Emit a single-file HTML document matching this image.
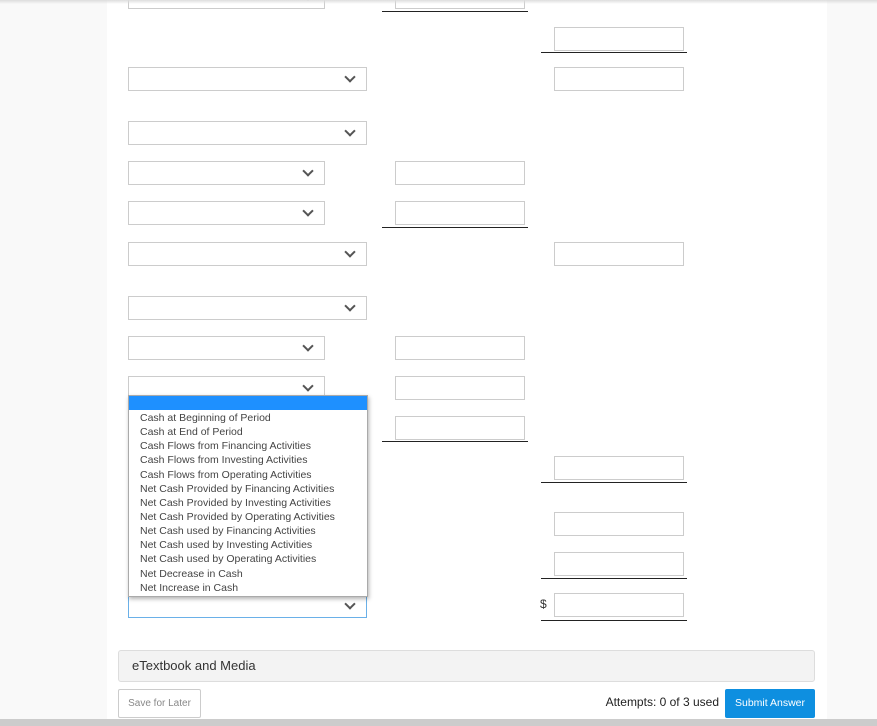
<!DOCTYPE html>
<html><head><style>
body{margin:0;width:877px;height:726px;background:#f9f9f9;position:relative;overflow:hidden;font-family:"Liberation Sans",sans-serif}
.panel{position:absolute;left:107px;top:0;width:720px;height:726px;background:#fff}
.s,.i{position:absolute;box-sizing:border-box;border:1px solid #ccc;background:#fff;height:24px}
.s.w{left:128px;width:239px}.s.n{left:128px;width:197px}
.s::after{content:"";position:absolute;right:12px;top:5px;width:6px;height:6px;border-right:2px solid #555;border-bottom:2px solid #555;transform:rotate(45deg)}
.i.a{left:395px;width:130px}.i.b{left:554px;width:130px}
.u{position:absolute;height:1px;background:#222}
.u.a{left:382px;width:146px}.u.b{left:541px;width:146px}
.dd{position:absolute;left:128px;top:395px;width:238px;height:200px;overflow:hidden;background:#fff;border:1px solid #aaa;box-shadow:1px 2px 4px rgba(0,0,0,.3);font-size:10.5px;color:#444}
.dd .h{height:14px;background:#1e90ff}
.dd div.o{padding-left:11px;height:14.15px;line-height:14px;white-space:nowrap}
</style></head><body>
<div style="position:absolute;left:0;top:0;width:877px;height:4px;background:linear-gradient(#ddd,#fff0);z-index:5"></div>
<div class="panel"></div>
<div class="s n" style="top:-15px"></div><div class="i a" style="top:-15px"></div><div class="u a" style="top:11px"></div>
<div class="i b" style="top:27px"></div><div class="u b" style="top:52px"></div>
<div class="s w" style="top:67px"></div><div class="i b" style="top:67px"></div>
<div class="s w" style="top:121px"></div>
<div class="s n" style="top:161px"></div><div class="i a" style="top:161px"></div>
<div class="s n" style="top:201px"></div><div class="i a" style="top:201px"></div><div class="u a" style="top:227px"></div>
<div class="s w" style="top:242px"></div><div class="i b" style="top:242px"></div>
<div class="s w" style="top:296px"></div>
<div class="s n" style="top:336px"></div><div class="i a" style="top:336px"></div>
<div class="s n" style="top:376px"></div><div class="i a" style="top:376px"></div>
<div class="i a" style="top:416px"></div><div class="u a" style="top:441px"></div>
<div class="i b" style="top:456px"></div><div class="u b" style="top:482px"></div>
<div class="i b" style="top:512px"></div>
<div class="i b" style="top:552px"></div><div class="u b" style="top:578px"></div>
<div class="s w" style="top:594px;border-color:#6ab0e8"></div>
<div style="position:absolute;left:540px;top:597px;font-size:12px;color:#333">$</div>
<div class="i b" style="top:593px"></div><div class="u b" style="top:620px"></div>
<div class="dd"><div class="h"></div><div style="height:1px"></div>
<div class="o">Cash at Beginning of Period</div><div class="o">Cash at End of Period</div><div class="o">Cash Flows from Financing Activities</div><div class="o">Cash Flows from Investing Activities</div><div class="o">Cash Flows from Operating Activities</div><div class="o">Net Cash Provided by Financing Activities</div><div class="o">Net Cash Provided by Investing Activities</div><div class="o">Net Cash Provided by Operating Activities</div><div class="o">Net Cash used by Financing Activities</div><div class="o">Net Cash used by Investing Activities</div><div class="o">Net Cash used by Operating Activities</div><div class="o">Net Decrease in Cash</div><div class="o">Net Increase in Cash</div></div>
<div style="position:absolute;left:118px;top:650px;width:697px;height:32px;box-sizing:border-box;background:#f3f3f3;border:1px solid #ddd;border-radius:3px;font-size:13px;color:#333;line-height:30px;padding-left:13px">eTextbook and Media</div>
<div style="position:absolute;left:118px;top:689px;width:83px;height:29px;box-sizing:border-box;border:1px solid #ccc;border-radius:2px;font-size:10px;color:#888;text-align:center;line-height:27px">Save for Later</div>
<div style="position:absolute;right:158px;top:695px;font-size:12px;color:#222">Attempts: 0 of 3 used</div>
<div style="position:absolute;left:725px;top:689px;width:90px;height:29px;background:#0e8fe0;border-radius:2px;color:#fff;font-size:10.5px;text-align:center;line-height:29px">Submit Answer</div>
<div style="position:absolute;left:0;top:719px;width:877px;height:7px;background:#ccc"></div>
</body></html>
